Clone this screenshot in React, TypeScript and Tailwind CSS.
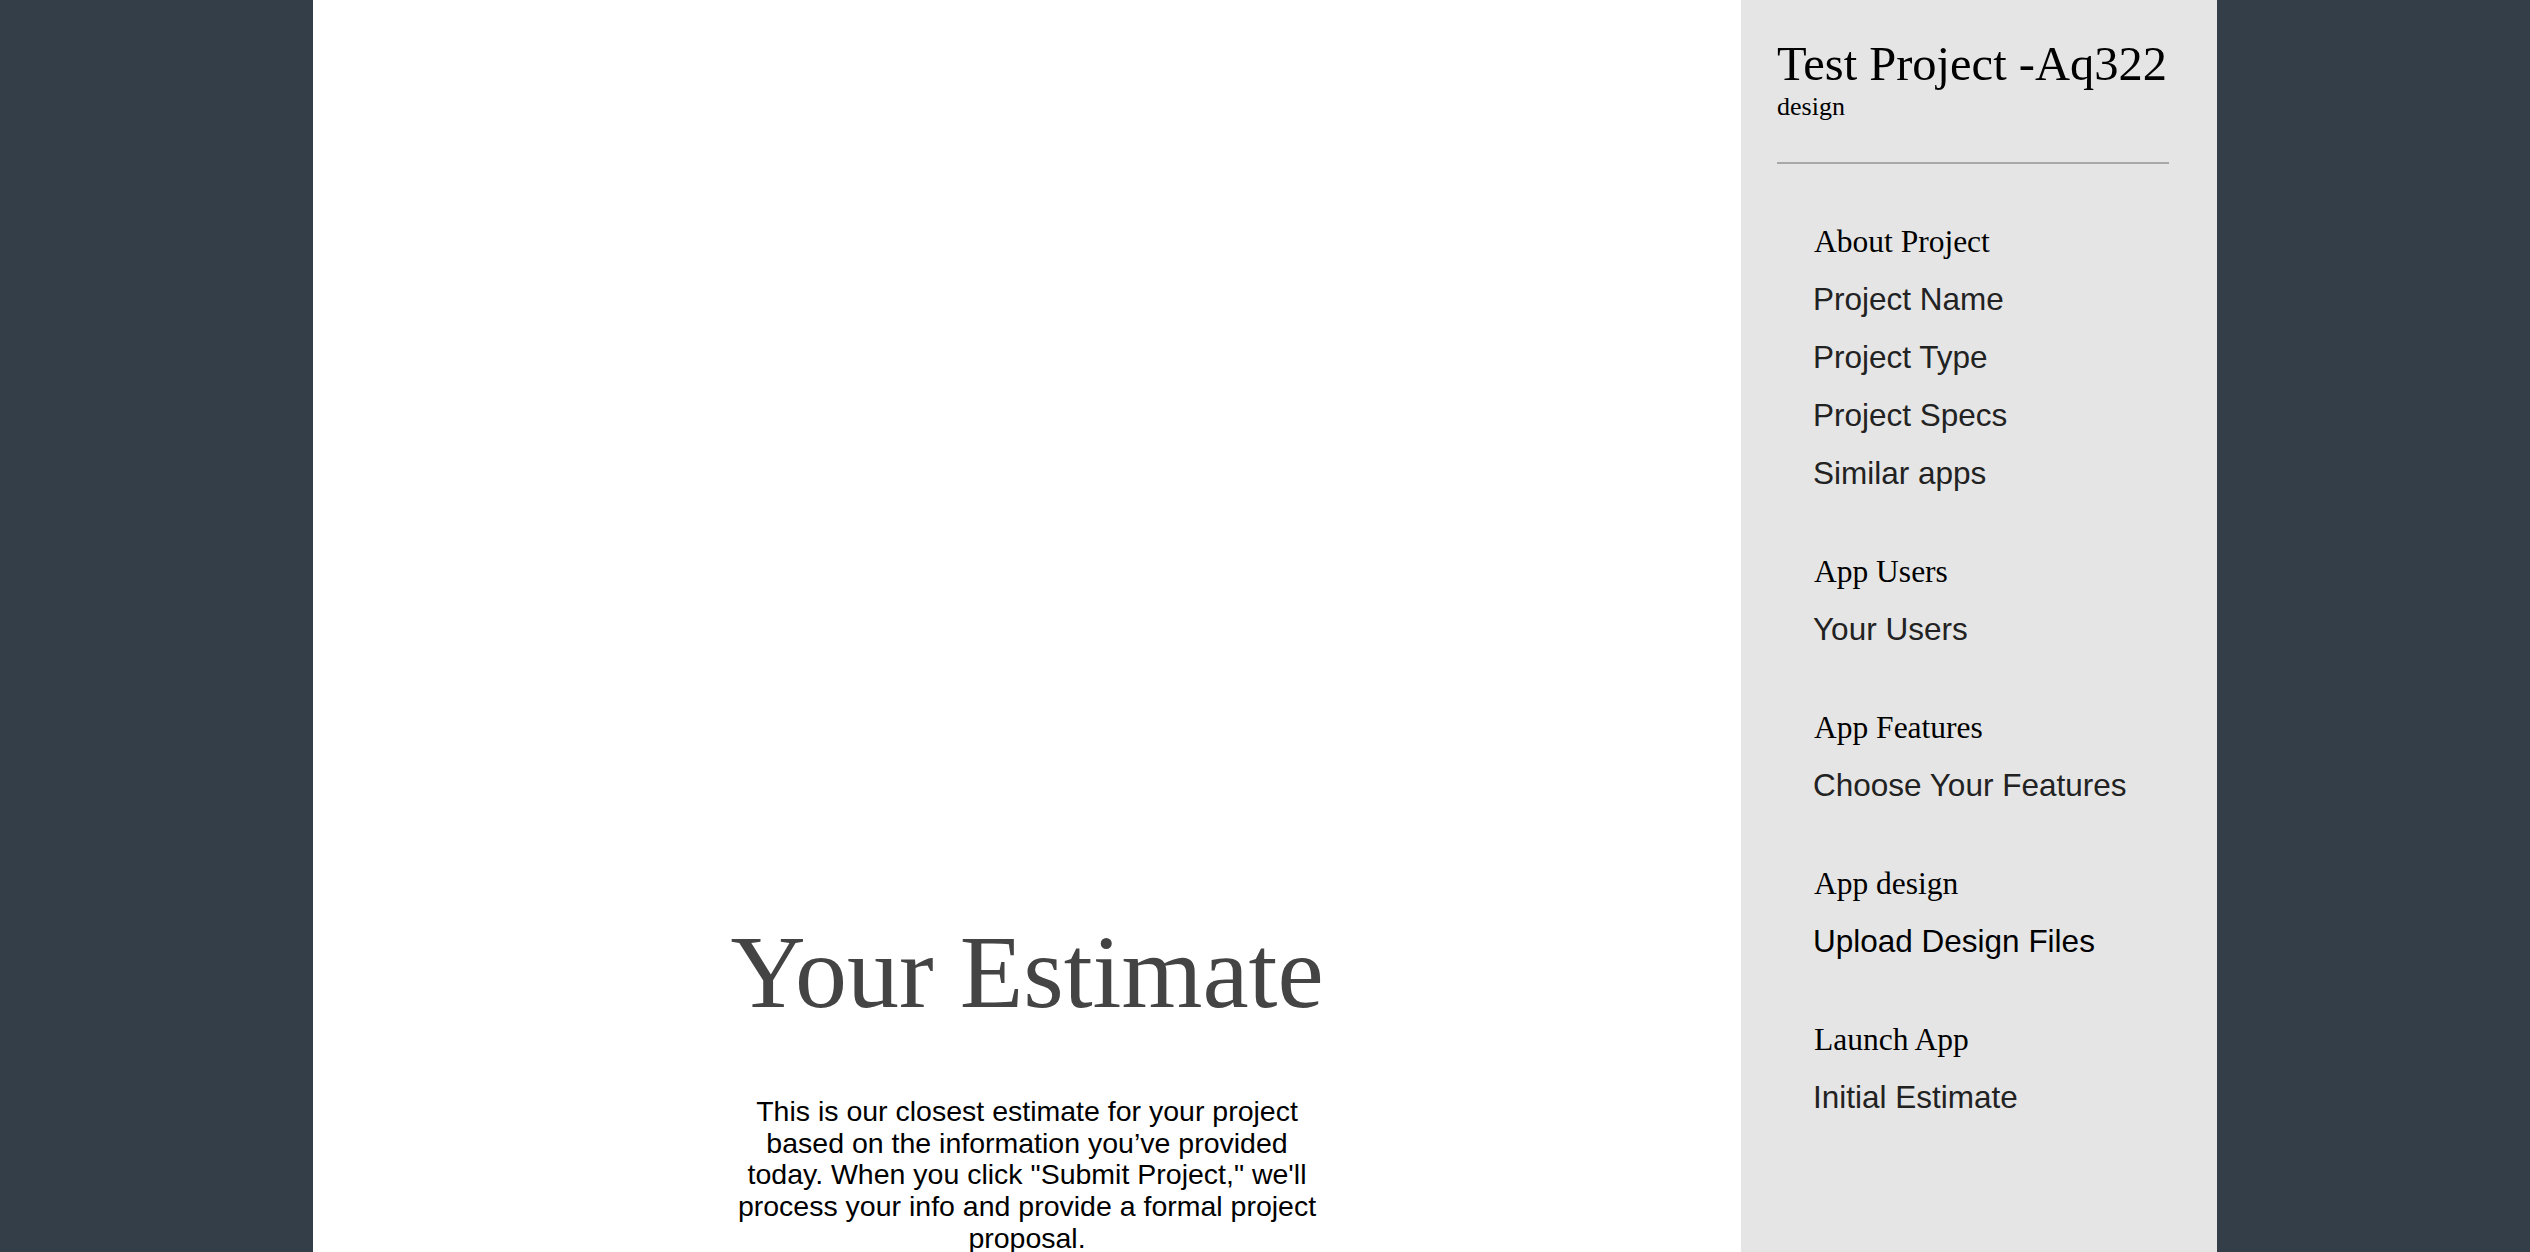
import React from "react";

const sections: { title: string; items: { label: string; strong?: boolean }[] }[] = [
  {
    title: "About Project",
    items: [
      { label: "Project Name" },
      { label: "Project Type" },
      { label: "Project Specs" },
      { label: "Similar apps" },
    ],
  },
  { title: "App Users", items: [{ label: "Your Users" }] },
  { title: "App Features", items: [{ label: "Choose Your Features" }] },
  { title: "App design", items: [{ label: "Upload Design Files", strong: true }] },
  { title: "Launch App", items: [{ label: "Initial Estimate" }] },
];

export default function App() {
  return (
    <div className="min-h-screen w-full bg-[#343e48]">
      <div className="mx-auto flex min-h-screen w-[1904px]">
        <main className="flex w-[1428px] flex-col items-center bg-white pt-[920px] pb-[40px]">
          <h1
            className="whitespace-nowrap text-[104px] leading-[104px] text-[#444444]"
            style={{ fontFamily: '"Liberation Serif", "Times New Roman", serif' }}
          >
            Your Estimate
          </h1>
          <p
            className="mt-[72px] w-[596px] text-center text-[28.5px] leading-[31.7px] text-black"
            style={{ fontFamily: '"Liberation Sans", Arial, sans-serif' }}
          >
            This is our closest estimate for your project based on the information you’ve provided today. When you
            click "Submit Project," we'll process your info and provide a formal project proposal.
          </p>
        </main>
        <aside className="w-[476px] bg-[#e5e5e5] pl-[36px] pr-[48px] pt-[40px]">
          <div style={{ fontFamily: '"Liberation Serif", "Times New Roman", serif' }} className="text-black">
            <div className="whitespace-nowrap text-[48.5px] leading-[48px]">Test Project -Aq322</div>
            <div className="mt-[6px] text-[26px] leading-[26px]">design</div>
          </div>
          <div className="mt-[42px] h-[2px] w-[392px] bg-[#a8a8a8]" />
          <nav className="mt-[62px] pl-[37px]">
            {sections.map((s, i) => (
              <div key={s.title} className={i === 0 ? "" : "mt-[54px]"}>
                <div
                  className="text-[31.5px] leading-[32px] text-black"
                  style={{ fontFamily: '"Liberation Serif", "Times New Roman", serif' }}
                >
                  {s.title}
                </div>
                <ul className="mt-[12px]">
                  {s.items.map((it) => (
                    <li
                      key={it.label}
                      className={
                        "-ml-[1px] whitespace-nowrap text-[31.5px] leading-[58px] " +
                        (it.strong ? "text-black" : "text-[#222222]")
                      }
                      style={{ fontFamily: '"Liberation Sans", Arial, sans-serif' }}
                    >
                      {it.label}
                    </li>
                  ))}
                </ul>
              </div>
            ))}
          </nav>
        </aside>
      </div>
    </div>
  );
}
